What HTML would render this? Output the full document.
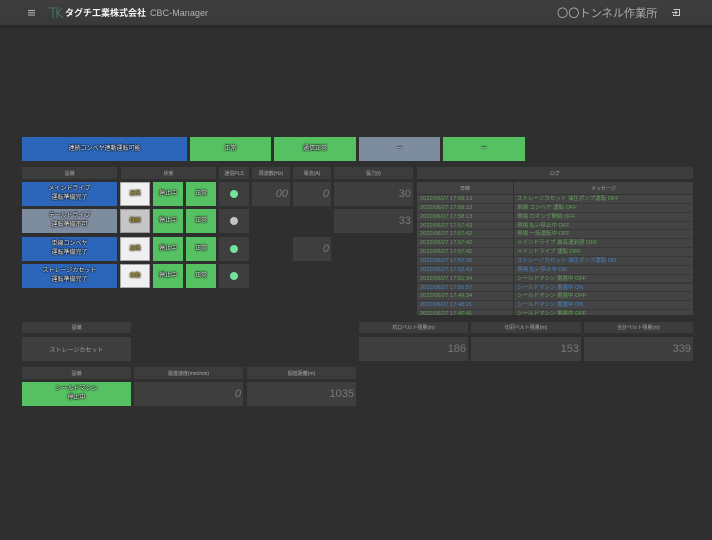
<!DOCTYPE html>
<html lang="ja"><head><meta charset="utf-8"><title>CBC-Manager</title>
<style>
html,body{margin:0;padding:0;width:712px;height:540px;overflow:hidden;background:#2f2f2f}
body{font-family:"Liberation Sans","Noto Sans CJK JP",sans-serif;position:relative}
#w{position:absolute;left:0;top:0;width:712px;height:540px;filter:blur(.3px)}
.a{position:absolute;box-sizing:border-box;display:flex;align-items:center;justify-content:center;text-align:center;white-space:nowrap}
.h{background:#3c3c3c;color:#a8a8a8;font-size:5px}
.p{background:#3e3e3e;color:#a0a0a0;font-size:6px}
.n{justify-content:flex-end;padding-right:2px;background:#3e3e3e;color:#787878;font:11px "Liberation Sans",sans-serif}
.i{font-style:italic}
.c{font-size:6px;line-height:9px;color:#eee;text-shadow:0 0 1.5px #000,0 0 1.5px #000,0 0 2px #000}
.b{background:#2c66ba}.g{background:#55c162}.s{background:#7d8c9f}
.w{background:#f0f0f0;border:1px solid #aaa}.v{background:#c6c6c6;border:1px solid #999}
.y{color:#c8b840;font-size:5.5px}
.d{width:8px;height:8px;border-radius:50%;background:#72e29c}
.l{position:absolute;left:417px;width:276px;height:8.85px;border-bottom:1px solid #383838;box-sizing:border-box;font-size:5.7px;line-height:8px;background:#444;white-space:nowrap;overflow:hidden}
.l span{position:absolute;top:0}.l span:first-child{left:3px}.l span+span{left:100px;font-size:5.5px}
.o{color:#659f5b}.u{color:#4a82c0}
</style></head><body><div id="w">
<div class="a" style="left:0;top:0;width:712px;height:25.5px;background:linear-gradient(#3e3e3e,#393939);border-bottom:1px solid #2a2a2a;box-shadow:0 1px 2px #222"></div>
<svg class="a" style="left:27px;top:9px" width="9" height="8"><path d="M1 1.500H8M1 3.800H8M1 6H8" stroke="#bbb" stroke-width="1"/></svg>
<svg class="a" style="left:49px;top:7px" width="15" height="12" fill="none" stroke="#3f8a6c" stroke-width=".8"><path d="M0 1H7M4 1V11M8 0V11M13 1L8.500 6L14 11"/></svg>
<div class="a" style="left:65px;top:6px;height:13px;color:#f4f4f4;font-weight:bold;font-size:9px">タグチ工業株式会社</div>
<div class="a" style="left:150px;top:6px;height:13px;color:#b4b4b4;font-size:9px;letter-spacing:.05px">CBC-Manager</div>
<div class="a" style="left:557px;top:5px;height:15px;color:#aaa;font-size:11.2px">〇〇トンネル作業所</div>
<svg class="a" style="left:671px;top:8px" width="10" height="9" fill="none" stroke="#ccc"><path d="M2.500 1.500H8.500V7.500H2.500V6M1 4.500H6M4.500 3L6 4.500L4.500 6"/></svg>

<div class="a b c" style="left:22px;top:137px;width:165px;height:24px">連続コンベヤ連動運転可能</div>
<div class="a g c" style="left:190px;top:137px;width:81px;height:24px">正常</div>
<div class="a g c" style="left:274px;top:137px;width:82px;height:24px">通信正常</div>
<div class="a s c" style="left:359px;top:137px;width:81px;height:24px">ー</div>
<div class="a g c" style="left:443px;top:137px;width:82px;height:24px">ー</div>

<div class="a h" style="left:22px;top:167px;width:95px;height:12px">設備</div>
<div class="a h" style="left:121px;top:167px;width:95px;height:12px">状態</div>
<div class="a h" style="left:219px;top:167px;width:30px;height:12px">通信PLS</div>
<div class="a h" style="left:252px;top:167px;width:38px;height:12px">周波数(Hz)</div>
<div class="a h" style="left:293px;top:167px;width:38px;height:12px">電流(A)</div>
<div class="a h" style="left:334px;top:167px;width:79px;height:12px">張力(t)</div>

<div class="a b c" style="left:22px;top:182px;width:95px;height:24px">メインドライブ<br>運転準備完了</div>
<div class="a w c y" style="left:120px;top:182px;width:30px;height:24px">遠隔</div>
<div class="a g c" style="left:153px;top:182px;width:30px;height:24px">停止中</div>
<div class="a g c" style="left:186px;top:182px;width:30px;height:24px">正常</div>
<div class="a p" style="left:219px;top:182px;width:30px;height:24px"><div class="d"></div></div>
<div class="a n i" style="left:252px;top:182px;width:38px;height:24px">00</div>
<div class="a n i" style="left:293px;top:182px;width:38px;height:24px">0</div>
<div class="a n" style="left:334px;top:182px;width:79px;height:24px">30</div>

<div class="a s c" style="left:22px;top:209px;width:95px;height:24px">テールドライブ<br>運転準備不可</div>
<div class="a v c y" style="left:120px;top:209px;width:30px;height:24px">機側</div>
<div class="a g c" style="left:153px;top:209px;width:30px;height:24px">停止中</div>
<div class="a g c" style="left:186px;top:209px;width:30px;height:24px">正常</div>
<div class="a p" style="left:219px;top:209px;width:30px;height:24px"><div class="d" style="background:#c4c4c4"></div></div>
<div class="a n" style="left:334px;top:209px;width:79px;height:24px">33</div>

<div class="a b c" style="left:22px;top:237px;width:95px;height:24px">単線コンベヤ<br>運転準備完了</div>
<div class="a w c y" style="left:120px;top:237px;width:30px;height:24px">遠隔</div>
<div class="a g c" style="left:153px;top:237px;width:30px;height:24px">停止中</div>
<div class="a g c" style="left:186px;top:237px;width:30px;height:24px">正常</div>
<div class="a p" style="left:219px;top:237px;width:30px;height:24px"><div class="d"></div></div>
<div class="a n i" style="left:293px;top:237px;width:38px;height:24px">0</div>

<div class="a b c" style="left:22px;top:264px;width:95px;height:24px">ストレージカセット<br>運転準備完了</div>
<div class="a w c y" style="left:120px;top:264px;width:30px;height:24px">自動</div>
<div class="a g c" style="left:153px;top:264px;width:30px;height:24px">停止中</div>
<div class="a g c" style="left:186px;top:264px;width:30px;height:24px">正常</div>
<div class="a p" style="left:219px;top:264px;width:30px;height:24px"><div class="d"></div></div>

<div class="a h" style="left:417px;top:167px;width:276px;height:12px">ログ</div>
<div class="a" style="left:417px;top:182px;width:276px;height:133px;background:#3a3a3a"></div>
<div class="a h" style="left:417px;top:182px;width:96px;height:13px;background:#424242;border-bottom:1px solid #333">日時</div>
<div class="a h" style="left:514px;top:182px;width:179px;height:13px;background:#424242;border-bottom:1px solid #333">メッセージ</div>
<div style="position:absolute;left:417px;top:195px;width:276px;height:120px;overflow:hidden">
<div class="l o" style="left:0;top:0"><span>2022/06/27 17:58:13</span><span>ストレージカセット 油圧ポンプ運転 OFF</span></div>
<div class="l o" style="left:0;top:8.85px"><span>2022/06/27 17:58:13</span><span>単線 コンベヤ 運転 OFF</span></div>
<div class="l o" style="left:0;top:17.7px"><span>2022/06/27 17:58:13</span><span>現場 ロギング開始 OFF</span></div>
<div class="l o" style="left:0;top:26.55px"><span>2022/06/27 17:57:43</span><span>現場 払い停止中 OFF</span></div>
<div class="l o" style="left:0;top:35.4px"><span>2022/06/27 17:57:42</span><span>現場 一括運転中 OFF</span></div>
<div class="l o" style="left:0;top:44.25px"><span>2022/06/27 17:57:42</span><span>メインドライブ 最高速到達 OFF</span></div>
<div class="l o" style="left:0;top:53.1px"><span>2022/06/27 17:57:42</span><span>メインドライブ 運転 OFF</span></div>
<div class="l u" style="left:0;top:61.95px"><span>2022/06/27 17:57:39</span><span>ストレージカセット 油圧ポンプ運転 ON</span></div>
<div class="l u" style="left:0;top:70.8px"><span>2022/06/27 17:52:43</span><span>現場 払い停止中 ON</span></div>
<div class="l o" style="left:0;top:79.65px"><span>2022/06/27 17:51:34</span><span>シールドマシン 掘進中 OFF</span></div>
<div class="l u" style="left:0;top:88.5px"><span>2022/06/27 17:50:57</span><span>シールドマシン 掘進中 ON</span></div>
<div class="l o" style="left:0;top:97.35px"><span>2022/06/27 17:49:34</span><span>シールドマシン 掘進中 OFF</span></div>
<div class="l u" style="left:0;top:106.2px"><span>2022/06/27 17:48:21</span><span>シールドマシン 掘進中 ON</span></div>
<div class="l o" style="left:0;top:115.05px"><span>2022/06/27 17:47:41</span><span>シールドマシン 掘進中 OFF</span></div>
</div>
<div style="position:absolute;left:513px;top:182px;width:1px;height:133px;background:#2f2f2f"></div>

<div class="a h" style="left:22px;top:322px;width:109px;height:11px">設備</div>
<div class="a p" style="left:22px;top:337px;width:109px;height:24px">ストレージカセット</div>
<div class="a h" style="left:22px;top:367px;width:109px;height:12px">設備</div>
<div class="a g c" style="left:22px;top:382px;width:109px;height:24px">シールドマシン<br>停止中</div>
<div class="a h" style="left:134px;top:367px;width:109px;height:12px">掘進速度(mm/min)</div>
<div class="a n i" style="left:134px;top:382px;width:109px;height:24px">0</div>
<div class="a h" style="left:247px;top:367px;width:109px;height:12px">掘進距離(m)</div>
<div class="a n" style="left:247px;top:382px;width:109px;height:24px">1035</div>

<div class="a h" style="left:359px;top:322px;width:109px;height:11px">坑口ベルト残量(m)</div>
<div class="a n" style="left:359px;top:337px;width:109px;height:24px">186</div>
<div class="a h" style="left:471px;top:322px;width:110px;height:11px">切羽ベルト残量(m)</div>
<div class="a n" style="left:471px;top:337px;width:110px;height:24px">153</div>
<div class="a h" style="left:584px;top:322px;width:109px;height:11px">合計ベルト残量(m)</div>
<div class="a n" style="left:584px;top:337px;width:109px;height:24px">339</div>
</div></body></html>
